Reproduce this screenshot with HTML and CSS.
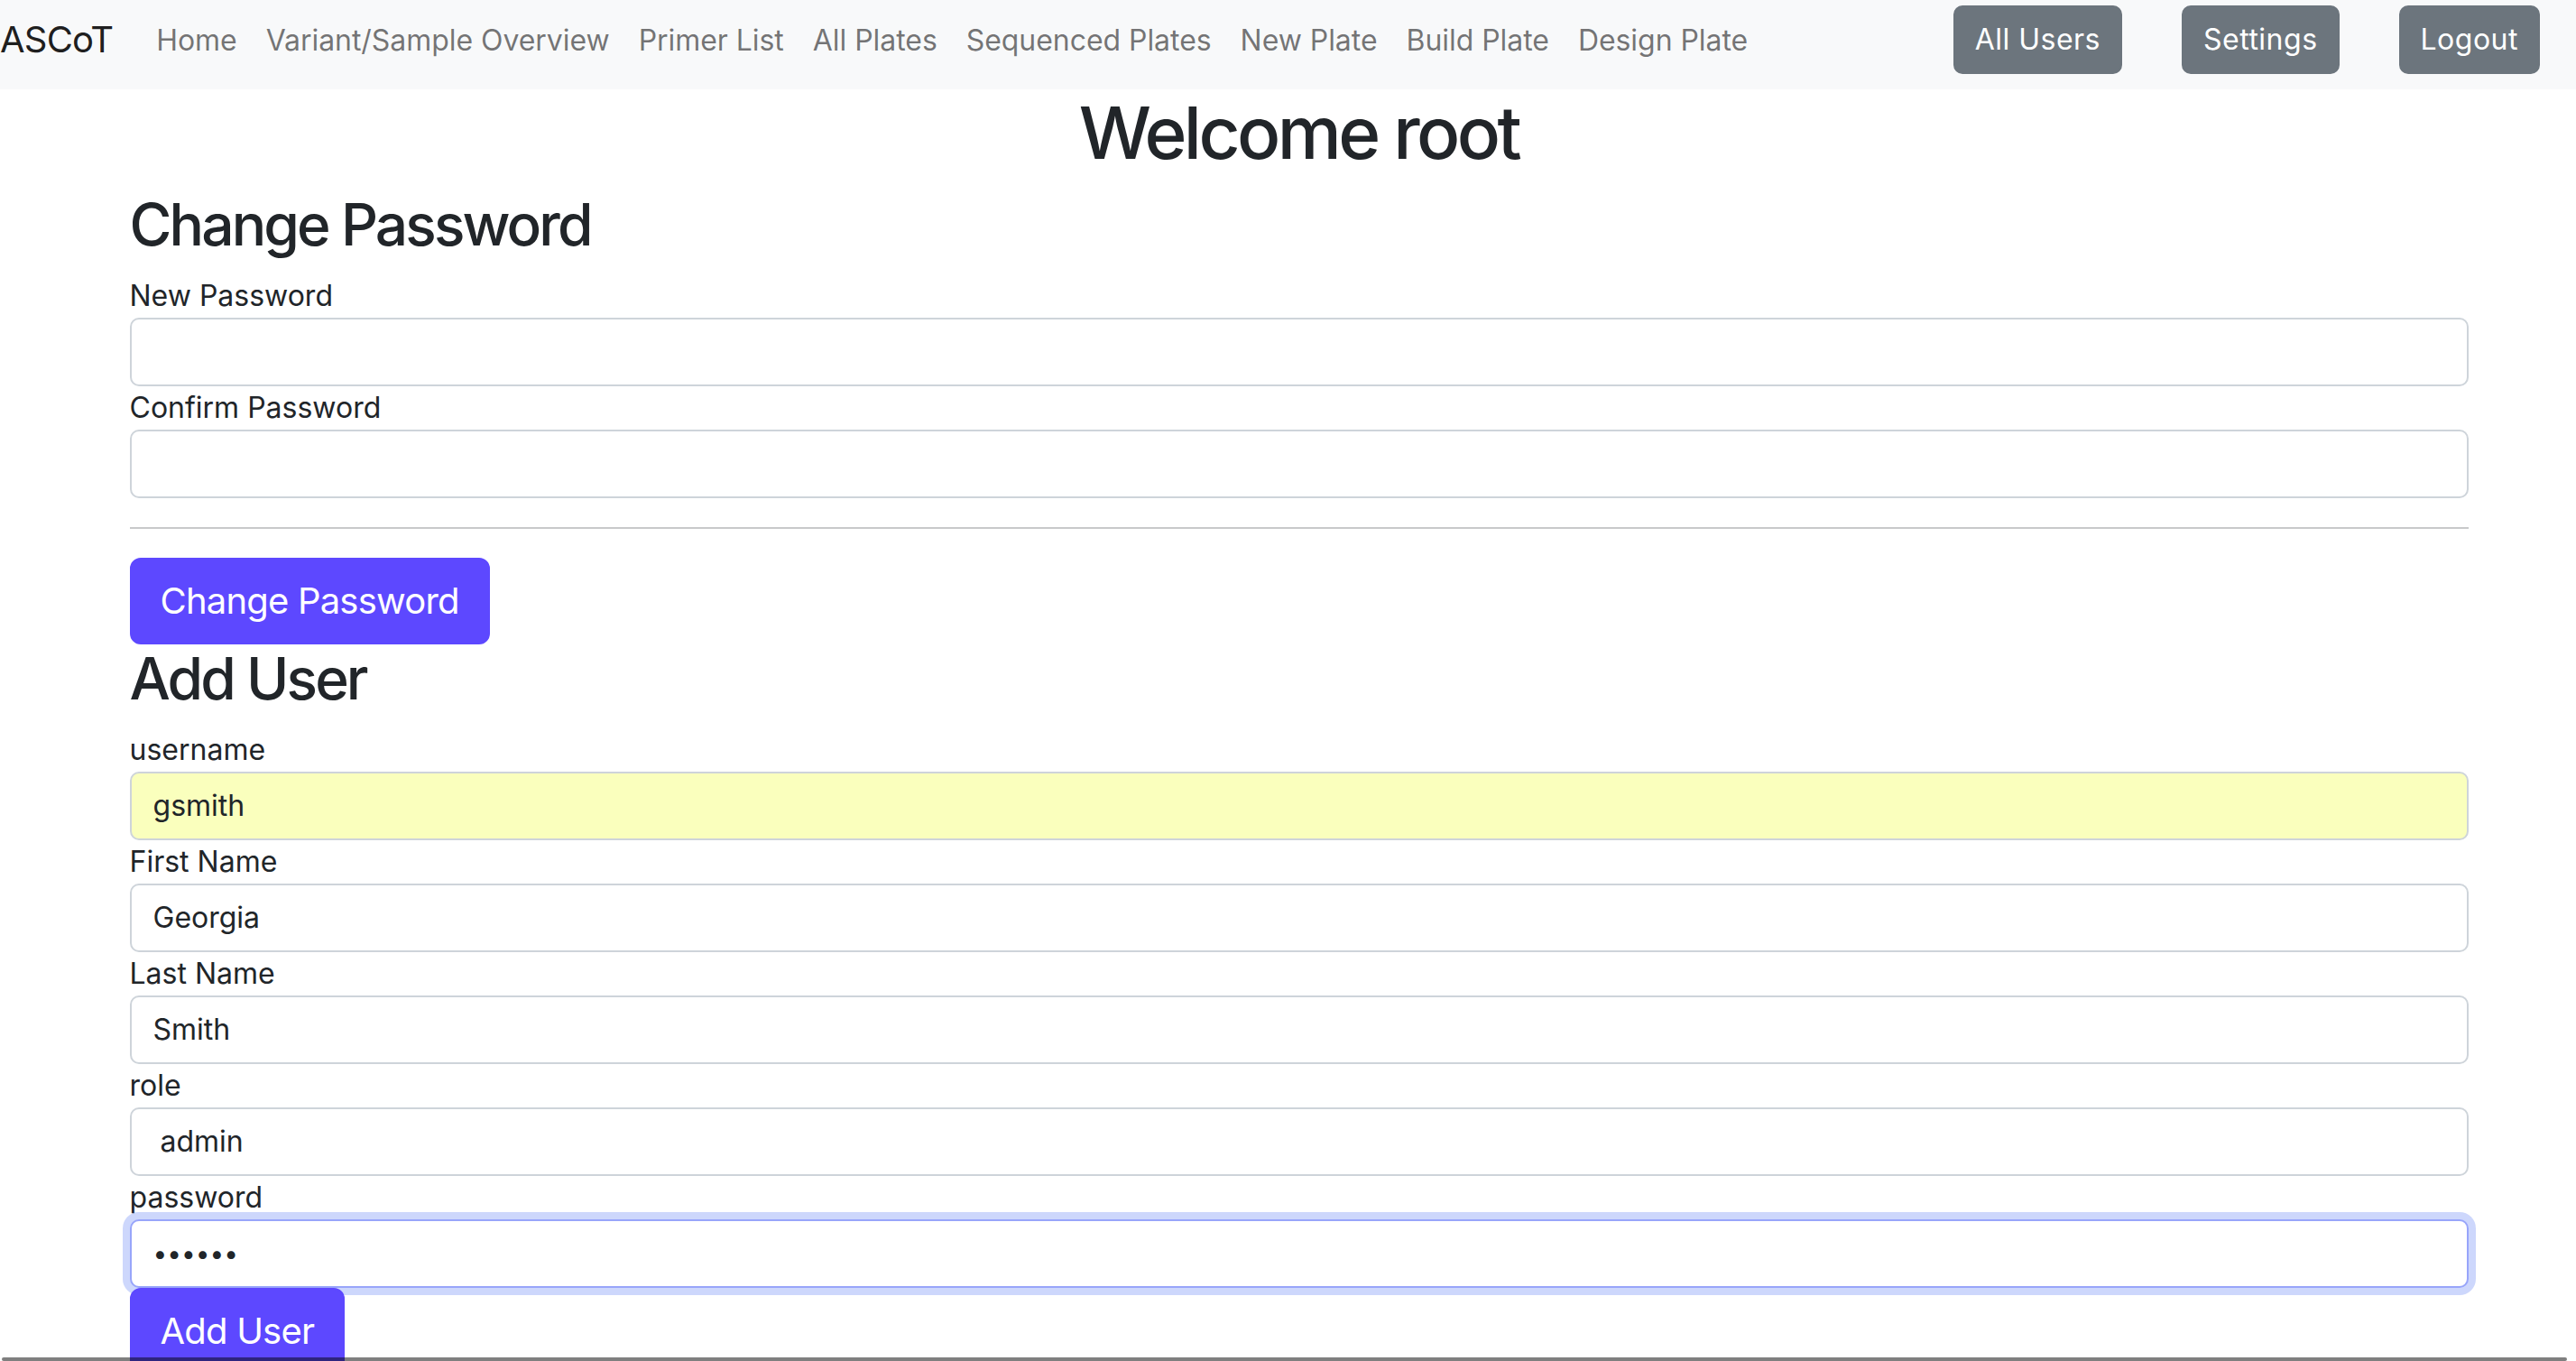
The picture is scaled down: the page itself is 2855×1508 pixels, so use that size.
FILE: index.html
```html
<!DOCTYPE html>
<html lang="en">
<head>
<meta charset="utf-8">
<title>ASCoT</title>
<link rel="stylesheet" href="styles.css">
</head>
<body>
<nav class="navbar">
  <a class="brand" href="#">ASCoT</a>
  <ul class="nav-links">
    <li><a class="nav-link" href="#">Home</a></li>
    <li><a class="nav-link" href="#">Variant/Sample Overview</a></li>
    <li><a class="nav-link" href="#">Primer List</a></li>
    <li><a class="nav-link" href="#">All Plates</a></li>
    <li><a class="nav-link" href="#">Sequenced Plates</a></li>
    <li><a class="nav-link" href="#">New Plate</a></li>
    <li><a class="nav-link" href="#">Build Plate</a></li>
    <li><a class="nav-link" href="#">Design Plate</a></li>
  </ul>
  <div class="nav-actions">
    <a class="btn btn-secondary" href="#">All Users</a>
    <a class="btn btn-secondary" href="#">Settings</a>
    <a class="btn btn-secondary" href="#">Logout</a>
  </div>
</nav>
<main class="container">
  <h1 class="title">Welcome root</h1>
  <form class="form">
    <h2 class="section-title">Change Password</h2>
    <label class="field-label" for="new-password">New Password</label>
    <input class="field" id="new-password" type="password">
    <label class="field-label" for="confirm-password">Confirm Password</label>
    <input class="field" id="confirm-password" type="password">
    <hr class="rule">
    <button class="btn btn-primary btn-lg" type="button">Change Password</button>
  </form>
  <form class="form">
    <h2 class="section-title">Add User</h2>
    <label class="field-label" for="username">username</label>
    <input class="field field-autofill" id="username" type="text" value="gsmith">
    <label class="field-label" for="first-name">First Name</label>
    <input class="field" id="first-name" type="text" value="Georgia">
    <label class="field-label" for="last-name">Last Name</label>
    <input class="field" id="last-name" type="text" value="Smith">
    <label class="field-label" for="role">role</label>
    <input class="field field-role" id="role" type="text" value="admin">
    <label class="field-label" for="password">password</label>
    <input class="field field-focus field-secret" id="password" type="text" value="••••••">
    <button class="btn btn-primary btn-lg" type="button">Add User</button>
  </form>
</main>
<div class="scrollbar"></div>
</body>
</html>
```
FILE: styles.css
```css
html, body {
  margin: 0;
  height: 100%;
  overflow: hidden;
}
body {
  font-family: Inter, "Noto Sans", sans-serif;
  font-size: 32px;
  line-height: 1.5;
  color: #212529;
  background: #fff;
}
.navbar {
  display: flex;
  align-items: flex-start;
  height: 99px;
  box-sizing: border-box;
  padding-right: 40px;
  background: #f8f9fa;
}
.brand {
  font-size: 40px;
  line-height: 60px;
  letter-spacing: -0.02em;
  padding-top: 14px;
  margin-left: 0;
  margin-right: 32px;
  color: rgba(0, 0, 0, 0.9);
  text-decoration: none;
}
.nav-links {
  display: flex;
  margin: 0;
  padding: 0;
  list-style: none;
}
.nav-link {
  display: block;
  font-size: 32px;
  line-height: 48px;
  letter-spacing: -0.05px;
  padding: 21px 16px 0;
  color: rgba(0, 0, 0, 0.55);
  text-decoration: none;
}
.nav-actions {
  display: flex;
  gap: 66px;
  margin-left: auto;
  padding-top: 6px;
}
.btn {
  display: inline-block;
  font-family: inherit;
  font-size: 32px;
  line-height: 48px;
  padding: 12px 22px;
  border: 2px solid transparent;
  border-radius: 10px;
  text-decoration: none;
  cursor: pointer;
}
.btn-secondary {
  background: #6c757d;
  border-color: #6c757d;
  color: #fff;
  letter-spacing: 0.5px;
}
.btn-primary {
  background: #5d48ff;
  border-color: #5d48ff;
  color: #fff;
}
.btn-lg {
  display: block;
  width: fit-content;
  font-size: 40px;
  line-height: 60px;
  letter-spacing: -0.02em;
  padding: 16px 32px;
  border-radius: 12px;
}
.container {
  width: 2592px;
  margin-left: calc(50% - 1284px);
}
.title {
  font-size: 80px;
  font-weight: 500;
  line-height: 1.2;
  letter-spacing: -0.045em;
  margin: 0 0 16px;
  text-align: center;
}
.form {
  margin: 0;
}
.section-title {
  font-size: 64px;
  font-weight: 500;
  line-height: 1.2;
  letter-spacing: -0.045em;
  margin: 0 0 16px;
}
.field-label {
  display: block;
  line-height: 48px;
}
.field {
  display: block;
  width: 100%;
  box-sizing: border-box;
  height: 76px;
  margin: 0;
  padding: 12px 24px;
  font-family: inherit;
  font-size: 32px;
  line-height: 48px;
  color: #212529;
  background: #fff;
  border: 2px solid #ced4da;
  border-radius: 10px;
  outline: none;
}
.field-autofill {
  background: #faffbd;
}
.field-role {
  padding-left: 32px;
}
.field-focus {
  border-color: #98a5fa;
  box-shadow: 0 0 0 8px #cdd7fc;
}
.field-secret {
  font-size: 28px;
  letter-spacing: 0;
}
.rule {
  margin: 32px 0;
  border: 0;
  border-top: 2px solid #c8c9ca;
}
.scrollbar {
  position: fixed;
  left: 2px;
  right: 10px;
  bottom: 0;
  height: 4px;
  border-radius: 2px;
  background: rgba(0, 0, 0, 0.5);
}
```
